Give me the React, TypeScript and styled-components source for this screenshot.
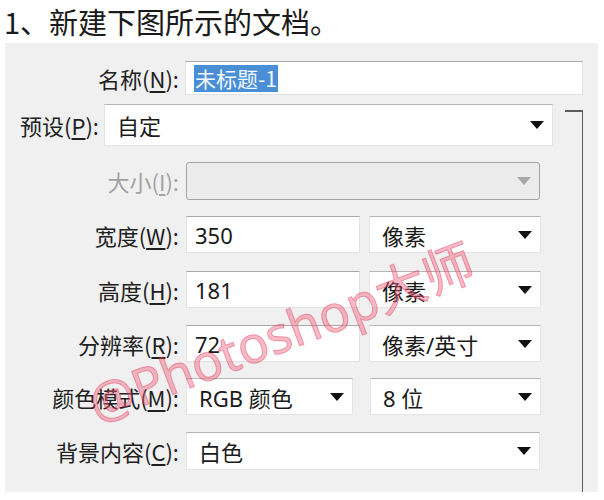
import styled, { createGlobalStyle } from "styled-components";

const GlobalStyle = createGlobalStyle`
  html, body {
    margin: 0;
    padding: 0;
    background: #ffffff;
  }
  body {
    font-family: "Noto Sans", "Noto Sans CJK SC", sans-serif;
    color: #1e1e1e;
  }
`;

const Page = styled.div`
  width: 604px;
  height: 500px;
  overflow: hidden;
  background: #ffffff;
`;

const Title = styled.h1`
  margin: 0;
  height: 43px;
  padding-left: 4px;
  font-family: "Noto Sans CJK SC", sans-serif;
  font-weight: 400;
  font-size: 29px;
  line-height: 42px;
  color: #1a1a1a;
`;

const Panel = styled.div`
  position: relative;
  margin-left: 5px;
  width: 593px;
  height: 449px;
  background: #f0f0f0;
  display: grid;
  grid-template-columns: 554px 18px;
  grid-template-rows: auto 1fr;
  column-gap: 6px;
  align-content: start;
`;

const NameRow = styled.div`
  grid-column: 1 / -1;
  display: flex;
  align-items: center;
  margin-top: 18px;
`;

const Form = styled.div`
  display: flex;
  flex-direction: column;
`;

const Row = styled.div<{ $top: number }>`
  display: flex;
  align-items: center;
  margin-top: ${(p) => p.$top}px;
`;

const Label = styled.label<{ $width: number; $disabled?: boolean }>`
  width: ${(p) => p.$width}px;
  flex-shrink: 0;
  text-align: right;
  font-family: "Noto Sans CJK SC", sans-serif;
  font-size: 22px;
  color: ${(p) => (p.$disabled ? "#a2a2a2" : "#202020")};
  white-space: nowrap;

  u {
    text-underline-offset: 3px;
  }
`;

const TextInput = styled.div<{ $width: number; $height: number }>`
  box-sizing: border-box;
  width: ${(p) => p.$width}px;
  height: ${(p) => p.$height}px;
  display: flex;
  align-items: center;
  padding-left: 8px;
  background: #ffffff;
  border: 1px solid #e2e2e2;
  border-top-color: #a9a9a9;
  font-family: "Noto Sans", "Noto Sans CJK SC", sans-serif;
  font-size: 22px;
  color: #1a1a1a;
`;

const Selected = styled.span`
  background: #4a8fd6;
  color: #f4f8ff;
  font-family: "Noto Sans CJK SC", sans-serif;
  font-size: 21px;
  line-height: 27px;
  padding: 0 1px;
`;

const Select = styled.div<{ $width: number; $height: number; $disabled?: boolean }>`
  box-sizing: border-box;
  width: ${(p) => p.$width}px;
  height: ${(p) => p.$height}px;
  display: flex;
  align-items: center;
  justify-content: space-between;
  padding: 0 8px 0 12px;
  background: ${(p) => (p.$disabled ? "#ececec" : "#ffffff")};
  border: 1px solid ${(p) => (p.$disabled ? "#a4a4a4" : "#e4e4e4")};
  border-top-color: ${(p) => (p.$disabled ? "#a4a4a4" : "#b5b5b5")};
  border-radius: ${(p) => (p.$disabled ? "3px" : "1px")};
  font-family: "Noto Sans", "Noto Sans CJK SC", sans-serif;
  font-size: 22px;
  color: #1a1a1a;
  white-space: nowrap;
`;

const Gap = styled.div<{ $w: number }>`
  width: ${(p) => p.$w}px;
  flex-shrink: 0;
`;

const Bracket = styled.div`
  grid-column: 2;
  grid-row: 2;
  margin-top: 15px;
  border-top: 2px solid #5c5c5c;
  border-right: 1.5px solid #5c5c5c;
  box-sizing: border-box;
`;

const Watermark = styled.div`
  position: absolute;
  left: 275px;
  top: 287px;
  transform: translate(-50%, -50%) rotate(-21deg);
  font-family: "Noto Sans", "Noto Sans CJK SC", sans-serif;
  font-size: 51px;
  white-space: nowrap;
  color: rgba(238, 92, 120, 0.42);
  -webkit-text-stroke: 1px rgba(220, 40, 80, 0.4);
  pointer-events: none;
`;

const Arrow = ({ disabled }: { disabled?: boolean }) => (
  <svg width="14" height="8" viewBox="0 0 14 8">
    <polygon points="0,0 14,0 7,8" fill={disabled ? "#a8a8a8" : "#111111"} />
  </svg>
);

export default function App() {
  return (
    <Page>
      <GlobalStyle />
      <Title>1、新建下图所示的文档。</Title>
      <Panel>
        <NameRow>
          <Label $width={174}>
            名称(<u>N</u>):
          </Label>
          <Gap $w={6} />
          <TextInput $width={402} $height={34}>
            <Selected>未标题-1</Selected>
          </TextInput>
        </NameRow>

        <Form>
          <Row $top={9}>
            <Label $width={94}>
              预设(<u>P</u>):
            </Label>
            <Gap $w={5} />
            <Select $width={449} $height={42}>
              <span>自定</span>
              <Arrow />
            </Select>
          </Row>

          <Row $top={16}>
            <Label $width={174} $disabled>
              大小(<u>I</u>):
            </Label>
            <Gap $w={7} />
            <Select $width={354} $height={38} $disabled>
              <span />
              <Arrow disabled />
            </Select>
          </Row>

          <Row $top={16}>
            <Label $width={174}>
              宽度(<u>W</u>):
            </Label>
            <Gap $w={7} />
            <TextInput $width={174} $height={37}>
              350
            </TextInput>
            <Gap $w={9} />
            <Select $width={172} $height={37}>
              <span>像素</span>
              <Arrow />
            </Select>
          </Row>

          <Row $top={18}>
            <Label $width={174}>
              高度(<u>H</u>):
            </Label>
            <Gap $w={7} />
            <TextInput $width={174} $height={37}>
              181
            </TextInput>
            <Gap $w={9} />
            <Select $width={172} $height={37}>
              <span>像素</span>
              <Arrow />
            </Select>
          </Row>

          <Row $top={17}>
            <Label $width={174}>
              分辨率(<u>R</u>):
            </Label>
            <Gap $w={7} />
            <TextInput $width={174} $height={37}>
              72
            </TextInput>
            <Gap $w={9} />
            <Select $width={172} $height={37}>
              <span>像素/英寸</span>
              <Arrow />
            </Select>
          </Row>

          <Row $top={16}>
            <Label $width={174}>
              颜色模式(<u>M</u>):
            </Label>
            <Gap $w={7} />
            <Select $width={167} $height={37}>
              <span>RGB 颜色</span>
              <Arrow />
            </Select>
            <Gap $w={17} />
            <Select $width={171} $height={37}>
              <span>8 位</span>
              <Arrow />
            </Select>
          </Row>

          <Row $top={17}>
            <Label $width={174}>
              背景内容(<u>C</u>):
            </Label>
            <Gap $w={7} />
            <Select $width={354} $height={38}>
              <span>白色</span>
              <Arrow />
            </Select>
          </Row>
        </Form>

        <Bracket />
        <Watermark>@Photoshop大师</Watermark>
      </Panel>
    </Page>
  );
}
